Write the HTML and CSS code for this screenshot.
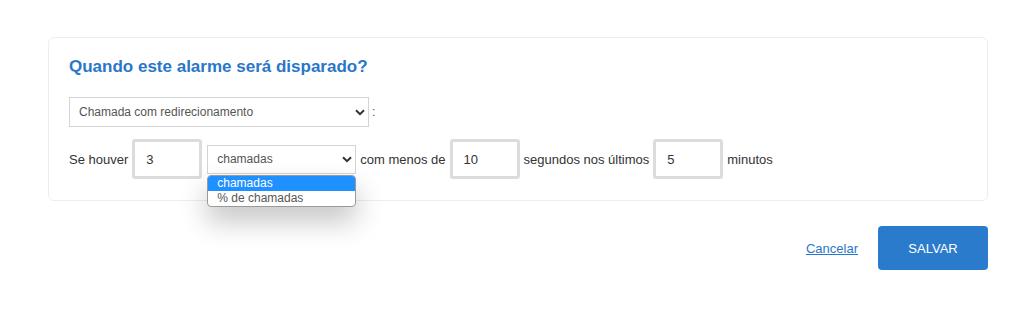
FILE: index.html
```html
<!DOCTYPE html>
<html lang="pt-BR">
<head>
  <meta charset="UTF-8">
  <title>Alarme</title>
  <link rel="stylesheet" href="styles.css">
</head>
<body>

  <div class="card">
    <h2 class="title">Quando este alarme será disparado?</h2>

    <div class="line">
      <div class="select-wrap select-wide">
        <select class="select">
          <option>Chamada com redirecionamento</option>
        </select>
        <svg class="chevron" width="10" height="7" viewBox="0 0 10 7"><path d="M1 1.2 L5 5.2 L9 1.2" fill="none" stroke="#333" stroke-width="2"/></svg>
      </div>
      <span class="colon">:</span>
    </div>

    <div class="line rule">
      <span>Se houver</span>
      <input class="num" type="text" value="3">
      <div class="select-wrap select-small">
        <select class="select">
          <option>chamadas</option>
        </select>
        <svg class="chevron" width="10" height="7" viewBox="0 0 10 7"><path d="M1 1.2 L5 5.2 L9 1.2" fill="none" stroke="#333" stroke-width="2"/></svg>
        <!-- open dropdown list -->
        <ul class="dropdown">
          <li class="active">chamadas</li>
          <li>% de chamadas</li>
        </ul>
      </div>
      <span>com menos de</span>
      <input class="num" type="text" value="10">
      <span>segundos nos últimos</span>
      <input class="num" type="text" value="5">
      <span>minutos</span>
    </div>
  </div>

  <div class="actions">
    <a href="#" class="cancel">Cancelar</a>
    <button class="save">SALVAR</button>
  </div>

</body>
</html>
```

FILE: styles.css
```css
body {
  margin: 0;
  padding: 0;
  font-family: 'Liberation Sans', Arial, sans-serif;
  background-color: #ffffff;
  color: #333333;
}
.card {
  margin: 37px 25px 0 48px;
  width: 898px;
  padding: 19px 20px 21px 20px;
  border: 1px solid #e6eff8;
  border-radius: 6px;
}
.title {
  margin: 0 0 20px 0;
  font-size: 17px;
  line-height: 20px;
  font-weight: bold;
  color: #2a77c9;
}
.line {
  display: flex;
  align-items: center;
  gap: 4px;
  font-size: 13px;
}
.rule {
  margin-top: 12px;
}
.select-wrap {
  position: relative;
}
.select {
  appearance: none;
  -webkit-appearance: none;
  display: block;
  width: 100%;
  margin: 0;
  border: 1px solid #d4d4d4;
  border-radius: 0;
  background-color: #ffffff;
  font-family: 'Liberation Sans', Arial, sans-serif;
  font-size: 12px;
  color: #555555;
  outline: none;
}
.select-wide {
  width: 300px;
}
.select-wide .select {
  height: 30px;
  padding: 0 9px;
}
.select-small {
  width: 149px;
  margin: 0 0 0 1px;
}
.select-small .select {
  height: 29px;
  padding: 0 9px;
}
.chevron {
  position: absolute;
  right: 4px;
  top: 50%;
  margin-top: -3px;
  pointer-events: none;
}
.colon {
  margin-left: -1px;
  color: #555555;
  font-size: 12px;
}
.num {
  width: 53px;
  height: 34px;
  padding: 0 0 0 11px;
  margin: 0;
  border: 3px solid #dcdcdc;
  border-radius: 3px;
  font-family: 'Liberation Sans', Arial, sans-serif;
  font-size: 13px;
  color: #333333;
  outline: none;
}
.dropdown {
  position: absolute;
  left: 0;
  top: 30px;
  width: 147px;
  margin: 0;
  padding: 0;
  list-style: none;
  background-color: #ffffff;
  border: 1px solid #9a9a9a;
  border-radius: 4px;
  overflow: hidden;
  box-shadow: 0 14px 28px rgba(0, 0, 0, 0.24);
  font-size: 12px;
  line-height: 15px;
  color: #555555;
  z-index: 2;
}
.dropdown li {
  padding: 0 9px;
}
.dropdown li.active {
  background-color: #1e90ff;
  color: #ffffff;
}
.actions {
  display: flex;
  justify-content: flex-end;
  align-items: center;
  gap: 20px;
  width: 940px;
  margin: 25px 0 0 48px;
}
.cancel {
  font-size: 13px;
  color: #2a77c9;
  text-decoration: underline;
}
.save {
  width: 110px;
  height: 44px;
  border: none;
  border-radius: 4px;
  background-color: #2b7bcd;
  color: #ffffff;
  font-family: 'Liberation Sans', Arial, sans-serif;
  font-size: 13px;
  cursor: pointer;
}
```
